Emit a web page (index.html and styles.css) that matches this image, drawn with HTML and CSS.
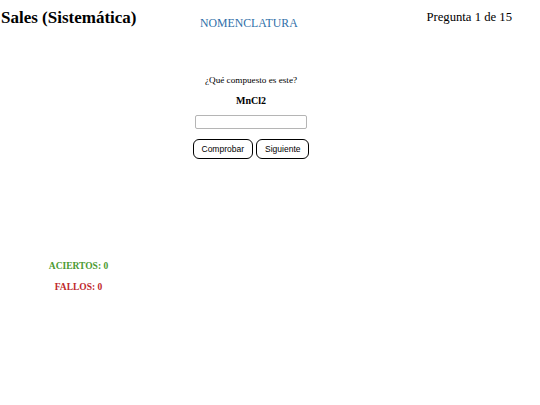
FILE: index.html
```html
<!DOCTYPE html>
<html lang="es">
<head>
<meta charset="utf-8">
<title>Sales (Sistemática)</title>
<link rel="stylesheet" href="styles.css">
</head>
<body>
<header class="top">
  <h1 class="title">Sales (Sistemática)</h1>
  <div class="section">NOMENCLATURA</div>
  <div class="counter">Pregunta 1 de 15</div>
</header>
<main class="quiz">
  <p class="question">¿Qué compuesto es este?</p>
  <p class="formula">MnCl2</p>
  <input class="answer" type="text">
  <div class="actions">
    <button class="btn">Comprobar</button>
    <button class="btn">Siguiente</button>
  </div>
</main>
<aside class="score">
  <p class="ok">ACIERTOS: 0</p>
  <p class="ko">FALLOS: 0</p>
</aside>
</body>
</html>
```

FILE: styles.css
```css
html, body {
  margin: 0;
  padding: 0;
  background: #ffffff;
  font-family: "Liberation Serif", "Times New Roman", serif;
  color: #000;
}
.top {
  display: flex;
  align-items: flex-start;
  padding: 8px 28px 0 1px;
  height: 40px;
  box-sizing: border-box;
}
.title {
  margin: 0;
  font-size: 17px;
  font-weight: bold;
  width: 199px;
  line-height: 19px;
}
.section {
  color: #2f6fa8;
  font-size: 11.8px;
  margin-top: 8px;
  line-height: 14px;
}
.counter {
  margin-left: auto;
  font-size: 12.7px;
  line-height: 15px;
  margin-top: 2px;
}
.quiz {
  display: flex;
  flex-direction: column;
  align-items: center;
  padding-top: 35px;
  padding-right: 38px;
}
.question {
  margin: 0;
  font-size: 9.2px;
  line-height: 11px;
}
.formula {
  margin: 9px 0 0;
  font-size: 10px;
  font-weight: bold;
  line-height: 12px;
}
.answer {
  margin-top: 8px;
  width: 112px;
  height: 14px;
  box-sizing: border-box;
  border: 1px solid #b5b5b5;
  border-radius: 2px;
  padding: 0 2px;
}
.actions {
  display: flex;
  gap: 3px;
  margin-top: 10px;
}
.btn {
  font-family: "Liberation Sans", Arial, sans-serif;
  font-size: 8.5px;
  background: #fff;
  border: 1px solid #000;
  border-radius: 6px;
  height: 20px;
  padding: 0 8px;
  color: #000;
}
.score {
  width: 157px;
  display: flex;
  flex-direction: column;
  align-items: center;
  margin-top: 102px;
}
.score p {
  margin: 0;
  font-size: 9.5px;
  font-weight: bold;
  line-height: 11px;
}
.ok { color: #4b9a30; }
.ko { color: #c0282d; margin-top: 10px !important; }
```
